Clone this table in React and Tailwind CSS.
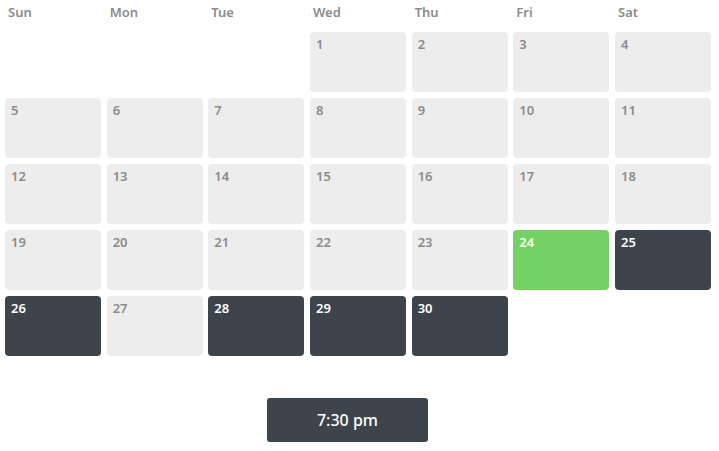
const days = ['Sun', 'Mon', 'Tue', 'Wed', 'Thu', 'Fri', 'Sat']

// leading blanks, then 1..30
const cells = [
  ...Array(3).fill(null),
  ...Array.from({ length: 30 }, (_, i) => i + 1),
]

const dark = [25, 26, 28, 29, 30]
const today = 24

function DayCell({ day }) {
  if (day === null) return <div />
  let tone = 'bg-[#ededed] text-[#8b8b8b]'
  if (day === today) tone = 'bg-[#74d163] text-white'
  else if (dark.includes(day)) tone = 'bg-[#3d444b] text-white'
  return (
    <div className={`h-[60px] rounded-[4px] px-[6px] pt-[4px] text-[13px] font-semibold leading-[16px] ${tone}`}>
      {day}
    </div>
  )
}

export default function App() {
  return (
    <div className="w-[719px] h-[451px] bg-white font-['Noto_Sans',sans-serif]">
      <div className="ml-[5px] w-[706px]">
        <div className="grid grid-cols-7 gap-x-[5.67px] h-[32px]">
          {days.map((d) => (
            <div key={d} className="pl-[3px] pt-[3px] text-[13px] font-semibold leading-[18px] text-[#8b8b8b]">
              {d}
            </div>
          ))}
        </div>
        <div className="grid grid-cols-7 gap-x-[5.67px] gap-y-[6px]">
          {cells.map((d, i) => (
            <DayCell key={i} day={d} />
          ))}
        </div>
      </div>
      <button className="mt-[42px] ml-[267px] w-[161px] h-[44px] rounded-[3px] bg-[#3d444b] text-white text-[16px] font-medium flex items-center justify-center">
        7:30 pm
      </button>
    </div>
  )
}
